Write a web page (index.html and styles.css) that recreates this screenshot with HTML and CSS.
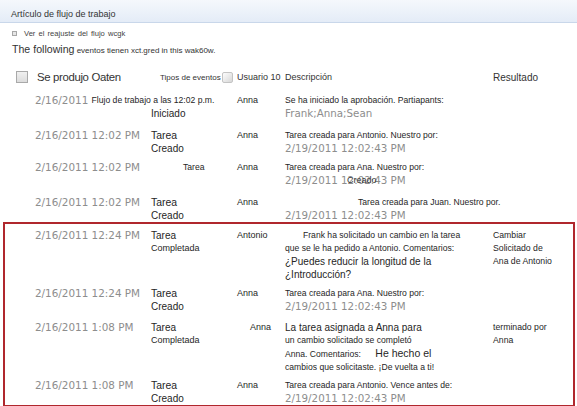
FILE: index.html
```html
<!DOCTYPE html>
<html lang="es">
<head>
    <meta charset="UTF-8">
    <meta name="viewport" content="width=device-width, initial-scale=1.0">
    <title>Artículo de flujo de trabajo</title>
    <link rel="stylesheet" href="styles.css">
</head>
<body>
    <div class="ribbon">Artículo de flujo de trabajo</div>

    <div class="intro">
        <div class="link"><span class="bullet"></span>Ver el reajuste del flujo wcgk</div>
        <p class="lead"><span class="lead-big">The following</span> eventos tienen xct.gred in this wak60w.</p>
    </div>

    <div class="history">
        <div class="row head">
            <div class="cell-title"><span class="check"></span>Se produjo Oaten</div>
            <div class="cell-kind">Tipos de eventos<span class="sort"></span></div>
            <div>Usuario 10</div>
            <div>Descripción</div>
            <div class="cell-result">Resultado</div>
        </div>

        <div class="row">
            <div class="when">2/16/2011 <span class="note">Flujo de trabajo a las 12:02 p.m.</span></div>
            <div class="kind"><br>Iniciado</div>
            <div class="user">Anna</div>
            <div class="desc">Se ha iniciado la aprobación. Partiapants:<br><span class="stamp">Frank;Anna;Sean</span></div>
            <div class="result"></div>
        </div>

        <div class="row snug">
            <div class="when">2/16/2011 12:02 PM</div>
            <div class="kind"><span class="task">Tarea</span><br>Creado</div>
            <div class="user">Anna</div>
            <div class="desc">Tarea creada para Antonio. Nuestro por:<br><span class="stamp">2/19/2011 12:02:43 PM</span></div>
            <div class="result"></div>
        </div>

        <div class="row">
            <div class="when">2/16/2011 12:02 PM</div>
            <div class="kind kind-shift"><span class="task-small">Tarea</span></div>
            <div class="user">Anna</div>
            <div class="desc">Tarea creada para Ana. Nuestro por:<br><span class="stamp">2/19/2011 12:02:43 PM</span>
                <span class="stray">Creado</span></div>
            <div class="result"></div>
        </div>

        <div class="row flush">
            <div class="when">2/16/2011 12:02 PM</div>
            <div class="kind"><span class="task">Tarea</span><br>Creado</div>
            <div class="user">Anna</div>
            <div class="desc"><span class="indent-far">Tarea creada para Juan. Nuestro por.</span><br><span class="stamp">2/19/2011 12:02:43 PM</span></div>
            <div class="result"></div>
        </div>

        <div class="changed">
            <div class="row snug">
                <div class="when">2/16/2011 12:24 PM</div>
                <div class="kind">Tarea<br><span class="done">Completada</span></div>
                <div class="user">Antonio</div>
                <div class="desc"><span class="indent">Frank ha solicitado un cambio en la tarea</span><br>que se le ha pedido a Antonio. Comentarios:<br><span class="quote">¿Puedes reducir la longitud de la</span><br><span class="quote">¿Introducción?</span></div>
                <div class="result">Cambiar<br>Solicitado de<br>Ana de Antonio</div>
            </div>

            <div class="row">
                <div class="when">2/16/2011 12:24 PM</div>
                <div class="kind"><span class="task">Tarea</span><br>Creado</div>
                <div class="user">Anna</div>
                <div class="desc">Tarea creada para Ana. Nuestro por:<br><span class="stamp">2/19/2011 12:02:43 PM</span></div>
                <div class="result"></div>
            </div>

            <div class="row late">
                <div class="when">2/16/2011 1:08 PM</div>
                <div class="kind">Tarea<br><span class="done">Completada</span></div>
                <div class="user user-shift">Anna</div>
                <div class="desc"><span class="quote">La tarea asignada a Anna para</span><br>un cambio solicitado se completó<br>Anna. Comentarios: <span class="quote reply">He hecho el</span><br>cambios que solicitaste. ¡De vuelta a ti!</div>
                <div class="result">terminado por<br>Anna</div>
            </div>

            <div class="row flush">
                <div class="when">2/16/2011 1:08 PM</div>
                <div class="kind"><span class="task">Tarea</span><br>Creado</div>
                <div class="user">Anna</div>
                <div class="desc">Tarea creada para Antonio. Vence antes de:<br><span class="stamp">2/19/2011 12:02:43 PM</span></div>
                <div class="result"></div>
            </div>
        </div>
    </div>
</body>
</html>
```

FILE: styles.css
```css
* {
    margin: 0;
    padding: 0;
    box-sizing: border-box;
}

body {
    width: 577px;
    height: 406px;
    overflow: hidden;
    background: #fff;
    color: #262626;
    font-family: 'Liberation Sans', Arial, sans-serif;
}

.ribbon {
    height: 23px;
    padding: 7px 0 0 11px;
    font-size: 9px;
    line-height: 14px;
    color: #333;
    background: linear-gradient(#f5f8fc, #e4ecf7);
    border-bottom: 1px solid #c9d7ea;
}

.intro {
    padding-left: 12px;
}

.link {
    display: flex;
    align-items: center;
    margin-top: 4px;
    height: 12px;
    font-size: 7.6px;
    word-spacing: 1px;
    color: #444;
}

.bullet {
    width: 5px;
    height: 5px;
    margin-right: 7px;
    border: 1px solid #a7a7a7;
    background: #e6e6e6;
}

.lead {
    margin-top: 3px;
    height: 14px;
    line-height: 14px;
    font-size: 8px;
    color: #333;
}

.lead-big {
    font-size: 10.6px;
}

.history {
    margin-top: 10px;
}

.row {
    display: grid;
    grid-template-columns: 116px 86px 48px 208px 1fr;
    padding: 5px 0 4px 35px;
    line-height: 13px;
}

.row span {
    vertical-align: top;
}

.row.snug {
    padding-bottom: 1px;
}

.row.flush {
    padding-bottom: 0;
}

.row.late {
    padding-top: 4px;
    padding-bottom: 0;
}

.head {
    grid-template-columns: 135px 86px 48px 208px 1fr;
    align-items: center;
    height: 22px;
    margin-bottom: 1px;
    padding: 0 0 0 16px;
    font-size: 9px;
    color: #333;
}

.cell-title {
    display: flex;
    align-items: center;
    font-size: 11.4px;
    letter-spacing: -0.35px;
}

.check {
    width: 12px;
    height: 12px;
    margin-right: 9px;
    border: 1px solid #a9a9a9;
    background: linear-gradient(#f0f0f0, #dcdcdc);
}

.cell-kind {
    display: flex;
    align-items: center;
    padding-left: 9px;
    font-size: 8px;
}

.sort {
    width: 11px;
    height: 11px;
    margin-left: 1px;
    border: 1px solid #c4c4c4;
    border-radius: 2px;
    background: linear-gradient(135deg, #fdfdfd, #d7d7d7);
}

.cell-result {
    font-size: 10px;
}

.when {
    white-space: nowrap;
    font-family: 'DejaVu Sans', Verdana, sans-serif;
    font-size: 10.4px;
    color: #8d8d8d;
}

.note {
    font-family: 'Liberation Sans', Arial, sans-serif;
    font-size: 8.6px;
    color: #262626;
}

.kind {
    font-size: 10px;
}

.kind-shift {
    padding-left: 32px;
}

.task {
    font-size: 10.4px;
}

.task-small {
    font-size: 8.6px;
}

.done {
    font-size: 9px;
}

.user {
    font-size: 9px;
}

.user-shift {
    padding-left: 13px;
}

.desc {
    position: relative;
    white-space: nowrap;
    font-size: 8.6px;
}

.stamp {
    font-family: 'DejaVu Sans', Verdana, sans-serif;
    font-size: 10.3px;
    color: #8d8d8d;
}

.stray {
    position: absolute;
    left: 62px;
    top: 13px;
    font-size: 9px;
    color: #333;
}

.indent {
    padding-left: 18px;
}

.indent-far {
    padding-left: 73px;
}

.quote {
    font-size: 10px;
}

.row .reply {
    margin-left: 12px;
    font-size: 10.5px;
    vertical-align: baseline;
}

.result {
    font-size: 8.7px;
}

.changed {
    margin: 0 2px 0 3px;
    border: 2px solid #b0272d;
}

.changed .row {
    padding-left: 30px;
}
```
